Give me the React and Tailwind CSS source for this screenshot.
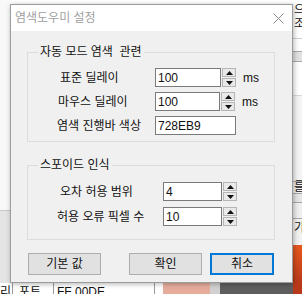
import { useState } from "react";

function Spinner() {
  return (
    <div className="flex flex-col w-[14px] h-[19px] gap-px">
      <div className="flex-1 border border-[#b5b5b5] bg-[#e9e9e9] flex items-center justify-center">
        <svg width="7" height="4" viewBox="0 0 7 4">
          <path d="M3.5 0 L7 4 L0 4 Z" fill="#111" />
        </svg>
      </div>
      <div className="flex-1 border border-[#b5b5b5] bg-[#e9e9e9] flex items-center justify-center">
        <svg width="7" height="4" viewBox="0 0 7 4">
          <path d="M0 0 L7 0 L3.5 4 Z" fill="#111" />
        </svg>
      </div>
    </div>
  );
}

function Field({ label, value, width, labelPad, spin, unit, labelWidth }) {
  return (
    <div className="flex items-center h-[19px]">
      <div className={`${labelWidth} ${labelPad} shrink-0 whitespace-nowrap`}>{label}</div>
      <div
        className={`${width} h-[19px] border border-[#7a7a7a] bg-white pl-[2px] flex items-center leading-none`}
      >
        {value}
      </div>
      {spin && (
        <div className="ml-px">
          <Spinner />
        </div>
      )}
      {unit && <div className="ml-[7px]">{unit}</div>}
    </div>
  );
}

function Group({ title, children, className }) {
  return (
    <div className={`relative border border-[#dcdcdc] ${className}`}>
      <div className="absolute left-[10px] top-[-8px] px-[2px] bg-[#f0f0f0] leading-[14px] whitespace-pre">
        {title}
      </div>
      {children}
    </div>
  );
}

export default function App() {
  const [std] = useState("100");
  const [mouse] = useState("100");
  const [color] = useState("728EB9");

  return (
    <div className="relative w-[302px] h-[294px] overflow-hidden bg-white font-['Liberation_Sans','Noto_Sans_CJK_KR',sans-serif] text-[12px] text-[#111] leading-[14px]">
      {/* background app */}
      <div className="flex h-[283px]">
        <div className="w-[10px] flex flex-col">
          <div className="h-[210px] bg-[#f8f8f8]" />
          <div className="h-px bg-[#c8c8c8]" />
          <div className="flex-1 bg-[#e4e4e4]" />
        </div>
        <div className="flex-1 bg-white" />
        <div className="w-[9px] flex flex-col overflow-hidden text-[12px]">
          <div className="h-[38px] pt-[3px] pl-[1px] leading-[14px] whitespace-nowrap">
            <div>으다</div>
            <div>조합</div>
          </div>
          <div className="h-px bg-[#d0d0d0]" />
          <div className="h-[12px]" />
          <div className="h-px bg-[#a8a8a8]" />
          <div className="h-[9px] bg-[#e2e2e2]" />
          <div className="h-px bg-[#a8a8a8]" />
          <div className="h-[33px]" />
          <div className="h-px bg-[#d8d8d8]" />
          <div className="h-[85px] bg-[#f4f4f4]" />
          <div className="h-px bg-[#a8a8a8]" />
          <div className="h-[11px] pl-[1px] leading-[11px] whitespace-nowrap bg-[#f2f2f2]">를의</div>
          <div className="h-px bg-[#a8a8a8]" />
          <div className="h-[8px] bg-[#e6e6e6]" />
          <div className="h-px bg-[#a8a8a8]" />
          <div className="h-[15px] bg-[#efefef]" />
          <div className="h-px bg-[#a8a8a8]" />
          <div className="h-[26px] pl-[1px] pt-[2px] leading-[14px] whitespace-nowrap bg-[#f2f2f2]">가.</div>
          <div className="flex-1 bg-gradient-to-b from-[#e8581f] to-[#b8391a]" />
        </div>
      </div>
      <div className="flex h-[11px] overflow-hidden">
        <div className="w-[163px] flex bg-white leading-[14px] overflow-hidden">
          <div className="w-[12px] pt-[2px] whitespace-nowrap overflow-hidden">리</div>
          <div className="w-px bg-[#999]" />
          <div className="w-[40px] pl-[6px] pt-[2px] whitespace-nowrap overflow-hidden">포트</div>
          <div className="w-px bg-[#999]" />
          <div className="w-[100px] pl-[3px] pt-[2px] whitespace-nowrap overflow-hidden">FF 00DE</div>
          <div className="w-px bg-[#999]" />
        </div>
        <div className="w-[47px] bg-[#e6ad9c]" />
        <div className="w-[10px] bg-[#d0d0d0]" />
        <div className="w-[73px] bg-[#5e5e5e]" />
        <div className="flex-1 bg-[#b8391a]" />
      </div>

      {/* dialog */}
      <div className="absolute left-[10px] top-[4px] w-[283px] h-[279px] border border-[#9c9c9c] bg-[#f0f0f0] shadow-[1px_1px_5px_rgba(0,0,0,0.3)] flex flex-col">
        <div className="h-[26px] bg-white flex items-center justify-between pl-[4px] pr-[8px] shrink-0">
          <span className="text-[#a0a0a0]">염색도우미 설정</span>
          <svg width="11" height="11" viewBox="0 0 11 11">
            <path d="M0.5 0.5 L10.5 10.5 M10.5 0.5 L0.5 10.5" stroke="#8c8c8c" strokeWidth="1" />
          </svg>
        </div>

        <div className="flex flex-col pl-[16px] pr-[17px] pt-[21px]">
          <Group title="자동 모드 염색  관련" className="h-[90px] pt-[15px] flex flex-col gap-[5px]">
            <Field label="표준 딜레이" value={std} width="w-[66px]" labelWidth="w-[127px]" labelPad="pl-[32px]" spin unit="ms" />
            <Field label="마우스 딜레이" value={mouse} width="w-[65px]" labelWidth="w-[127px]" labelPad="pl-[30px]" spin unit="ms" />
            <Field label="염색 진행바 색상" value={color} width="w-[81px]" labelWidth="w-[127px]" labelPad="pl-[29px]" />
          </Group>

          <Group title="스포이드 인식" className="mt-[23px] h-[75px] pt-[16px] flex flex-col gap-[6px]">
            <Field label="오차 허용 범위" value="4" width="w-[59px]" labelWidth="w-[135px]" labelPad="pl-[32px]" spin />
            <Field label="허용 오류 픽셀 수" value="10" width="w-[59px]" labelWidth="w-[135px]" labelPad="pl-[29px]" spin />
          </Group>

          <div className="flex mt-[13px] pl-px">
            <button className="w-[73px] h-[22px] border border-[#adadad] bg-[#e1e1e1] flex items-center justify-center">
              기본 값
            </button>
            <button className="ml-[28px] w-[73px] h-[22px] border border-[#adadad] bg-[#e1e1e1] flex items-center justify-center">
              확인
            </button>
            <button className="ml-[8px] w-[64px] h-[22px] border-2 border-[#0078d7] bg-[#e1e1e1] flex items-center justify-center">
              취소
            </button>
          </div>
        </div>
      </div>
    </div>
  );
}
